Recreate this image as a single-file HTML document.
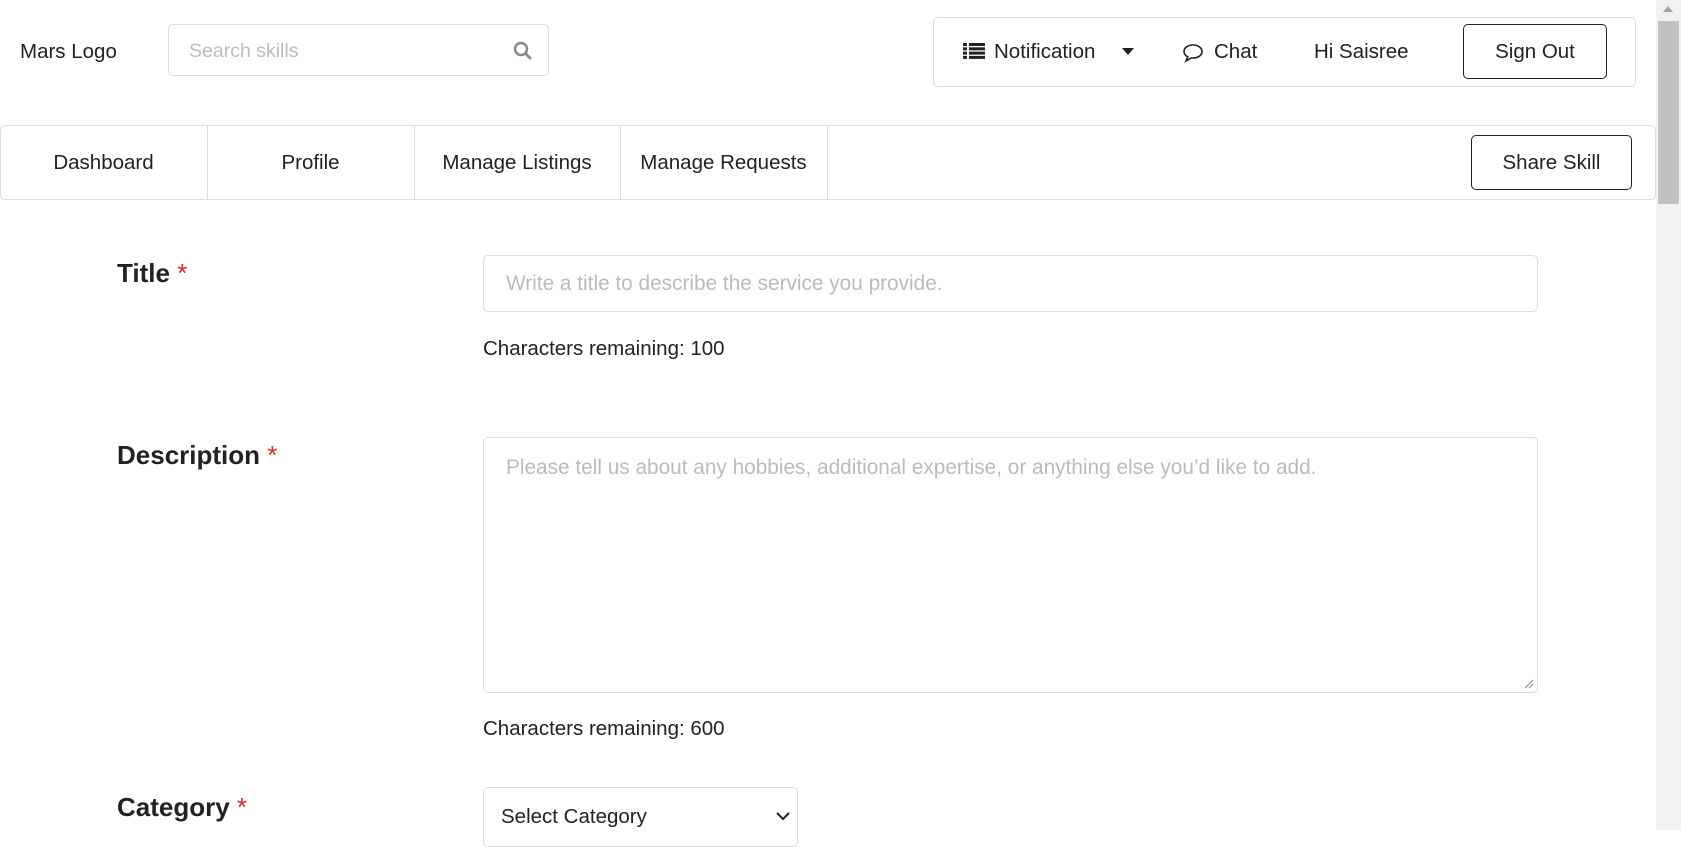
<!DOCTYPE html>
<html><head><meta charset="utf-8"><style>
*{box-sizing:border-box;margin:0;padding:0}
body{width:1681px;height:830px;overflow:hidden;background:#fff;font-family:"Liberation Sans",sans-serif;color:#222;position:relative}
.a{position:absolute}
.box{border:1px solid #ddd;border-radius:5px}
.t{font-size:20.5px;white-space:nowrap}
.btn{border:1.5px solid #222;border-radius:5px;display:flex;align-items:center;justify-content:center;font-size:20.5px}
.lbl{font-size:26px;font-weight:bold;color:#222}
.lbl span{color:#db2828;font-weight:normal}
.ph{color:#bbb;font-size:20.8px;white-space:nowrap}
</style></head><body>
<div class="a t" style="left:20px;top:40px">Mars Logo</div>
<div class="a box" style="left:168px;top:24px;width:381px;height:52px"></div>
<div class="a ph" style="left:189px;top:40px;font-size:19.5px">Search skills</div>
<svg class="a" style="left:513px;top:41px" width="19" height="19" viewBox="0 0 19 19"><circle cx="8" cy="8" r="6" fill="none" stroke="#888" stroke-width="2.4"/><path d="M12.5 12.5 L17 17" stroke="#888" stroke-width="2.8" stroke-linecap="round"/></svg>

<div class="a box" style="left:933px;top:17px;width:703px;height:70px"></div>
<svg class="a" style="left:963px;top:43px" width="22" height="16" viewBox="0 0 22 16"><g fill="#222"><rect x="0" y="0" width="4" height="3"/><rect x="6" y="0" width="16" height="3"/><rect x="0" y="4.3" width="4" height="3"/><rect x="6" y="4.3" width="16" height="3"/><rect x="0" y="8.6" width="4" height="3"/><rect x="6" y="8.6" width="16" height="3"/><rect x="0" y="12.9" width="4" height="3"/><rect x="6" y="12.9" width="16" height="3"/></g></svg>
<div class="a t" style="left:994px;top:40px">Notification</div>
<svg class="a" style="left:1122px;top:48px" width="12" height="7"><path d="M0 0H12L6 7Z" fill="#222"/></svg>
<svg class="a" style="left:1182px;top:43px" width="22" height="20" viewBox="0 0 22 20"><path d="M11 2C5.5 2 2 5 2 8.5c0 2.3 1.5 4.2 3.8 5.3L4 18l5.2-3.1c.6.1 1.2.1 1.8.1 5.5 0 9-3 9-6.5S16.5 2 11 2z" fill="none" stroke="#222" stroke-width="1.6"/></svg>
<div class="a t" style="left:1214px;top:40px">Chat</div>
<div class="a t" style="left:1314px;top:40px">Hi Saisree</div>
<div class="a btn" style="left:1463px;top:24px;width:144px;height:55px">Sign Out</div>

<div class="a box" style="left:0;top:125px;width:1656px;height:75px"></div>
<div class="a" style="left:207px;top:126px;width:1px;height:73px;background:#ddd"></div>
<div class="a" style="left:414px;top:126px;width:1px;height:73px;background:#ddd"></div>
<div class="a" style="left:620px;top:126px;width:1px;height:73px;background:#ddd"></div>
<div class="a" style="left:827px;top:126px;width:1px;height:73px;background:#ddd"></div>
<div class="a t" style="left:0;width:207px;text-align:center;top:151px">Dashboard</div>
<div class="a t" style="left:207px;width:207px;text-align:center;top:151px">Profile</div>
<div class="a t" style="left:414px;width:206px;text-align:center;top:151px">Manage Listings</div>
<div class="a t" style="left:620px;width:207px;text-align:center;top:151px">Manage Requests</div>
<div class="a btn" style="left:1471px;top:135px;width:161px;height:55px">Share Skill</div>

<div class="a" style="left:1656px;top:0;width:25px;height:830px;background:#f1f1f1"></div>
<div class="a" style="left:1658px;top:21px;width:21px;height:183px;background:#c1c1c1"></div>
<svg class="a" style="left:1663px;top:6px" width="10" height="6"><path d="M0 6L5 0L10 6Z" fill="#a3a3a3"/></svg>

<div class="a lbl" style="left:117px;top:258px">Title <span>*</span></div>
<div class="a box" style="left:483px;top:255px;width:1055px;height:57px"></div>
<div class="a ph" style="left:506px;top:272px">Write a title to describe the service you provide.</div>
<div class="a t" style="left:483px;top:337px">Characters remaining: 100</div>

<div class="a lbl" style="left:117px;top:440px">Description <span>*</span></div>
<div class="a box" style="left:483px;top:437px;width:1055px;height:256px"></div>
<div class="a ph" style="left:506px;top:456px">Please tell us about any hobbies, additional expertise, or anything else you’d like to add.</div>
<svg class="a" style="left:1524px;top:679px" width="10" height="10"><path d="M9 1L1 9M9 5L5 9" stroke="#888" stroke-width="1"/></svg>
<div class="a t" style="left:483px;top:717px">Characters remaining: 600</div>

<div class="a lbl" style="left:117px;top:792px">Category <span>*</span></div>
<div class="a box" style="left:483px;top:787px;width:315px;height:60px"></div>
<div class="a t" style="left:501px;top:805px">Select Category</div>
<svg class="a" style="left:776px;top:812px" width="14" height="9"><path d="M1 1L7 7L13 1" fill="none" stroke="#222" stroke-width="2"/></svg>
</body></html>
